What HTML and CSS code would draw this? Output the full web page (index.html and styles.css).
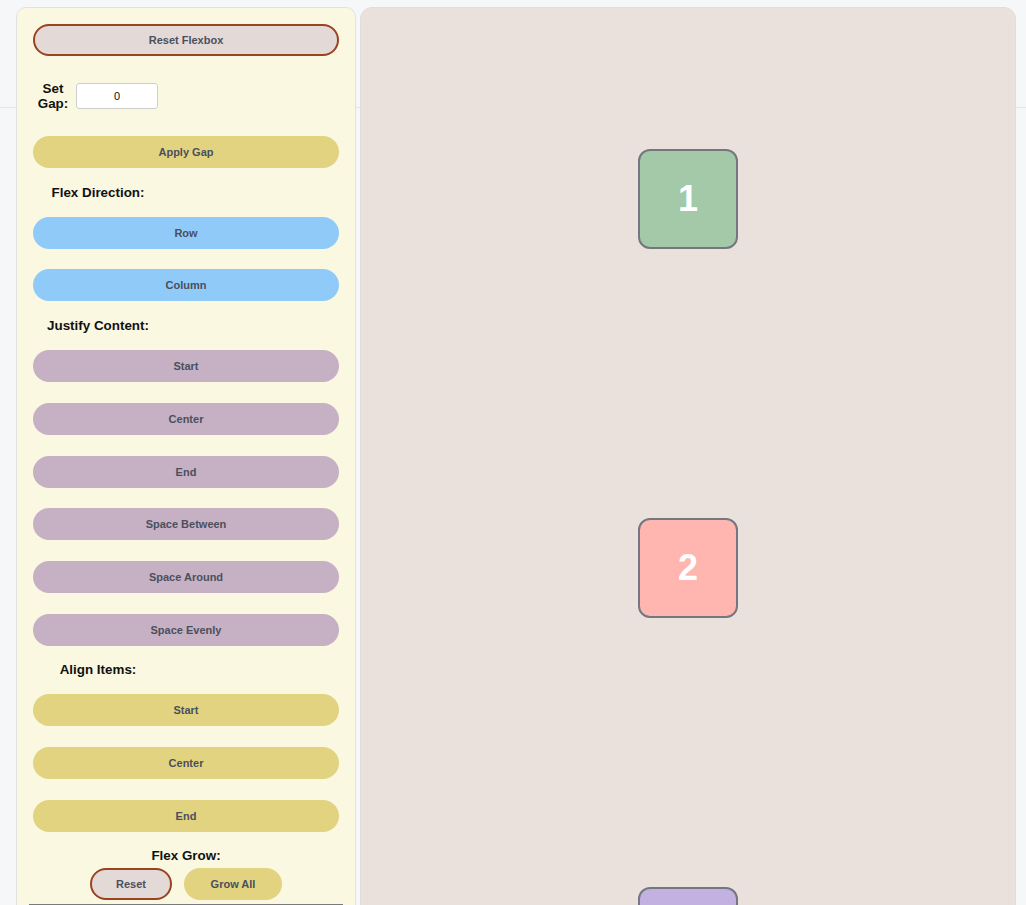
FILE: index.html
```html
<!DOCTYPE html>
<html lang="en">
<head>
<meta charset="utf-8">
<title>Flexbox Playground</title>
<link rel="stylesheet" href="styles.css">
</head>
<body>
<div class="layout">
  <aside class="sidebar">
    <button class="btn btn-reset">Reset Flexbox</button>
    <div class="gap-row">
      <label class="gap-label" for="gap">Set Gap:</label>
      <input id="gap" class="gap-input" type="text" value="0">
    </div>
    <button class="btn btn-yellow btn-apply">Apply Gap</button>

    <div class="section-label">Flex Direction:</div>
    <div class="group group-dir">
      <button class="btn btn-blue">Row</button>
      <button class="btn btn-blue">Column</button>
    </div>

    <div class="section-label">Justify Content:</div>
    <div class="group group-justify">
      <button class="btn btn-mauve">Start</button>
      <button class="btn btn-mauve">Center</button>
      <button class="btn btn-mauve">End</button>
      <button class="btn btn-mauve">Space Between</button>
      <button class="btn btn-mauve">Space Around</button>
      <button class="btn btn-mauve">Space Evenly</button>
    </div>

    <div class="section-label section-align">Align Items:</div>
    <div class="group group-align">
      <button class="btn btn-yellow">Start</button>
      <button class="btn btn-yellow">Center</button>
      <button class="btn btn-yellow">End</button>
    </div>

    <div class="grow-label">Flex Grow:</div>
    <div class="grow-row">
      <button class="btn btn-reset btn-small btn-grow-reset">Reset</button>
      <button class="btn btn-yellow btn-small btn-grow-all">Grow All</button>
    </div>
    <div class="divider"></div>
  </aside>

  <main class="stage">
    <div class="item item-1">1</div>
    <div class="item item-2">2</div>
    <div class="item item-3">3</div>
  </main>
</div>
</body>
</html>
```

FILE: styles.css
```css
* {
  box-sizing: border-box;
}

html, body {
  height: 100%;
}

body {
  margin: 0;
  padding: 7px 10px 0 16px;
  overflow: hidden;
  font-family: "Liberation Sans", Arial, sans-serif;
  background:
    linear-gradient(#e3e4e8, #e3e4e8) 0 107px / 100% 1px no-repeat,
    #f6f7f9;
}

.layout {
  display: flex;
  gap: 4px;
  align-items: flex-start;
}

.sidebar {
  width: 340px;
  flex: none;
  background: #faf8e0;
  border: 1px solid #e2e2e2;
  border-radius: 10px;
  padding: 16px 16px 40px;
  display: flex;
  flex-direction: column;
}

.btn {
  display: block;
  width: 100%;
  height: 32px;
  border: none;
  border-radius: 16px;
  font-family: "Liberation Sans", Arial, sans-serif;
  font-size: 11px;
  font-weight: bold;
  color: #4b4f5c;
  padding: 0;
  cursor: pointer;
}

.btn-reset {
  background: #e3d9d7;
  border: 2px solid #9b4221;
}

.btn-yellow {
  background: #e2d381;
}

.btn-blue {
  background: #90caf9;
}

.btn-mauve {
  background: #c6b0c4;
}

.gap-row {
  display: flex;
  align-items: center;
  margin: 25px 0;
}

.gap-label {
  width: 40px;
  text-align: center;
  font-size: 13.4px;
  line-height: 15px;
  font-weight: bold;
  color: #111;
}

.gap-input {
  margin-left: 3px;
  width: 82px;
  height: 26px;
  border: 1px solid #cfcfcf;
  border-radius: 3px;
  background: #fff;
  text-align: center;
  font-family: "Liberation Sans", Arial, sans-serif;
  font-size: 11px;
  color: #111;
  padding: 0;
}

.section-label {
  width: 130px;
  text-align: center;
  font-size: 13.4px;
  line-height: 17px;
  font-weight: bold;
  color: #111;
  margin: 16px 0 16px;
}

.section-align {
  margin: 15px 0 16px;
}

.group {
  display: flex;
  flex-direction: column;
}

.group-dir {
  gap: 20px;
}

.group-justify {
  gap: 20.75px;
}

.group-align {
  gap: 21px;
}

.grow-label {
  text-align: center;
  font-size: 13.4px;
  line-height: 17px;
  font-weight: bold;
  color: #111;
  margin: 15px 0 4px;
}

.grow-row {
  display: flex;
  justify-content: center;
  gap: 12px;
}

.btn-small {
  width: auto;
}

.btn-grow-reset {
  width: 82px;
}

.btn-grow-all {
  width: 98px;
}

.divider {
  margin: 4px -4px 0;
  border-top: 1px solid #7a7a7a;
}

.stage {
  flex: 1;
  height: 1200px;
  background: #eae0dc;
  border: 1px solid #e2dcda;
  border-radius: 12px;
  display: flex;
  flex-direction: column;
  align-items: center;
  gap: 269px;
  padding-top: 141px;
}

.item {
  width: 100px;
  height: 100px;
  flex: none;
  border: 2px solid #737880;
  border-radius: 12px;
  display: flex;
  align-items: center;
  justify-content: center;
  color: #fff;
  font-size: 36px;
  font-weight: bold;
}

.item-1 {
  background: #a3c9a8;
}

.item-2 {
  background: #ffb6b0;
}

.item-3 {
  background: #c3b1e1;
}
```
